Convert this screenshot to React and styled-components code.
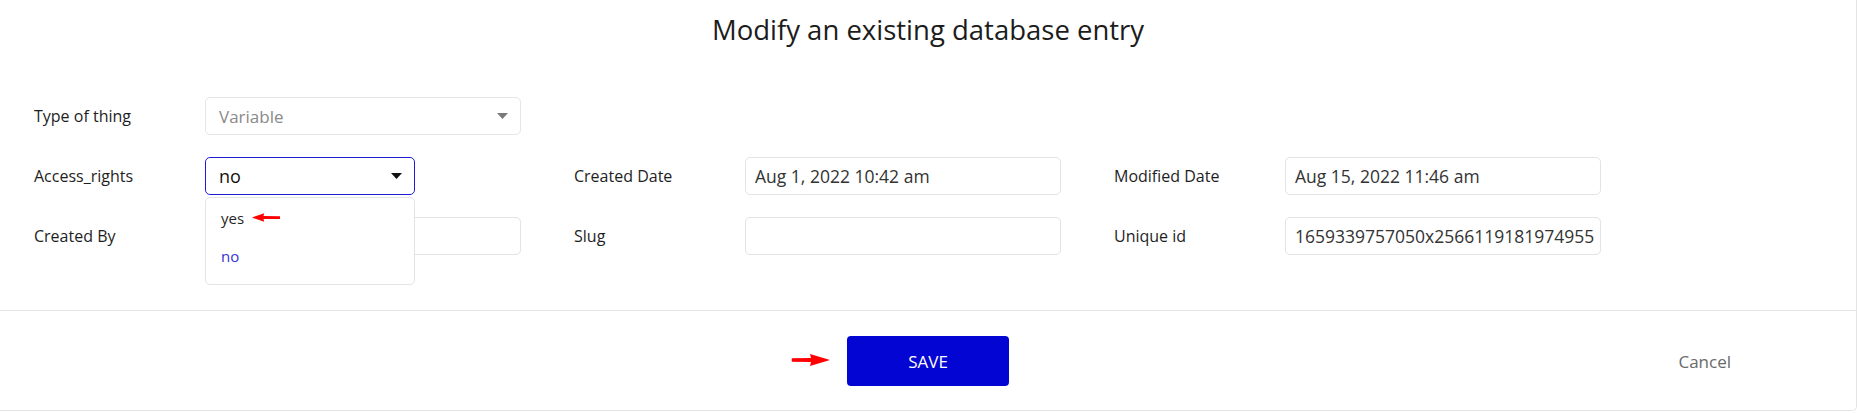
import React from "react";
import styled, { createGlobalStyle } from "styled-components";

const GlobalStyle = createGlobalStyle`
  body {
    margin: 0;
    background: #ffffff;
    font-family: "Open Sans", "Liberation Sans", sans-serif;
  }
`;

const Caret = ({ color }) => (
  <svg width="11" height="6" viewBox="0 0 11 6">
    <path d="M0 0 H11 L5.5 6 Z" fill={color} />
  </svg>
);

const RedArrow = ({ left }) => (
  <svg width="39" height="12" viewBox="0 0 39 12">
    {left ? (
      <path d="M0 6 L17 0 L16 3.8 L39 4.2 L39 8 L16 8.2 L17 12 Z" fill="#ff0000" />
    ) : (
      <path d="M39 6 L19 0 L20 4 L1 4.3 Q0 6 1 7.7 L20 8 L19 12 Z" fill="#ff0000" />
    )}
  </svg>
);

const App = () => {
  return (
    <>
      <GlobalStyle />
      <Card>
        <Title>Modify an existing database entry</Title>
        <Form>
          <Field>
            <Label>Type of thing</Label>
            <Select>
              <Placeholder>Variable</Placeholder>
              <Caret color="#7a7a7a" />
            </Select>
          </Field>
          <Empty />
          <Empty />

          <Field>
            <Label>Access_rights</Label>
            <Anchor>
              <Select $active $narrow>
                <Value>no</Value>
                <Caret color="#111111" />
              </Select>
              <Menu>
                <Option>
                  yes
                  <ArrowSlot>
                    <RedArrow left />
                  </ArrowSlot>
                </Option>
                <Option $selected>no</Option>
              </Menu>
            </Anchor>
          </Field>
          <Field>
            <Label>Created Date</Label>
            <Input>
              <InputText>Aug 1, 2022 10:42 am</InputText>
            </Input>
          </Field>
          <Field>
            <Label>Modified Date</Label>
            <Input>
              <InputText>Aug 15, 2022 11:46 am</InputText>
            </Input>
          </Field>

          <Field>
            <Label>Created By</Label>
            <Input />
          </Field>
          <Field>
            <Label>Slug</Label>
            <Input />
          </Field>
          <Field>
            <Label>Unique id</Label>
            <Input>
              <InputText>1659339757050x2566119181974955</InputText>
            </Input>
          </Field>
        </Form>
        <Footer>
          <span />
          <SaveWrap>
            <SaveArrow>
              <RedArrow />
            </SaveArrow>
            <SaveButton>SAVE</SaveButton>
          </SaveWrap>
          <Cancel>Cancel</Cancel>
        </Footer>
      </Card>
    </>
  );
};

const Card = styled.div`
  width: 1857px;
  box-sizing: border-box;
  border-right: 1px solid #e4e4e4;
  border-bottom: 1px solid #e4e4e4;
  border-bottom-right-radius: 5px;
  background: #ffffff;
`;

const Title = styled.h1`
  margin: 0;
  padding-top: 11px;
  font-size: 27.5px;
  line-height: 37px;
  font-weight: 400;
  color: #1c1c1c;
  text-align: center;
`;

const Form = styled.div`
  display: grid;
  grid-template-columns: repeat(3, 540px);
  grid-auto-rows: 38px;
  row-gap: 22px;
  padding: 49px 0 55px 34px;
  border-bottom: 1px solid #e6e6e6;
`;

const Empty = styled.div``;

const Field = styled.div`
  display: flex;
  align-items: center;
`;

const Label = styled.div`
  width: 171px;
  flex-shrink: 0;
  font-size: 16px;
  color: #1e1e1e;
`;

const Anchor = styled.div`
  position: relative;
  height: 38px;
`;

const Select = styled.div`
  box-sizing: border-box;
  width: ${(p) => (p.$narrow ? "210px" : "316px")};
  height: 38px;
  display: flex;
  align-items: center;
  justify-content: space-between;
  padding: 0 12px 0 13px;
  border: 1px solid ${(p) => (p.$active ? "#1d1dd6" : "#e6e6e6")};
  border-radius: 5px;
  background: #ffffff;
`;

const Placeholder = styled.span`
  font-size: 17px;
  color: #8a8a8a;
`;

const Value = styled.span`
  font-size: 18px;
  color: #111111;
`;

const Menu = styled.div`
  position: absolute;
  top: 40px;
  left: 0;
  width: 210px;
  box-sizing: border-box;
  padding: 1px 0 9px;
  border: 1px solid #e4e4e4;
  border-radius: 5px;
  background: #ffffff;
  z-index: 2;
`;

const Option = styled.div`
  display: flex;
  align-items: center;
  height: 38px;
  padding-left: 15px;
  font-size: 15px;
  color: ${(p) => (p.$selected ? "#3434d8" : "#262626")};
`;

const ArrowSlot = styled.span`
  display: inline-flex;
  margin-left: 8px;
  margin-top: -2px;
  svg {
    width: 28px;
    height: 11px;
  }
`;

const Input = styled.div`
  box-sizing: border-box;
  width: 316px;
  height: 38px;
  padding: 0 4px 0 9px;
  display: flex;
  align-items: center;
  border: 1px solid #e3e3e3;
  border-radius: 5px;
`;

const InputText = styled.span`
  display: block;
  overflow: hidden;
  white-space: nowrap;
  font-size: 17.5px;
  color: #333333;
`;

const Footer = styled.div`
  display: grid;
  grid-template-columns: 1fr auto 1fr;
  align-items: center;
  padding: 25px 0 24px;
`;

const SaveWrap = styled.div`
  position: relative;
`;

const SaveArrow = styled.span`
  position: absolute;
  right: calc(100% + 17px);
  top: 50%;
  margin-top: -7px;
  display: flex;
`;

const SaveButton = styled.button`
  width: 162px;
  height: 50px;
  border: none;
  border-radius: 4px;
  background: #0305d2;
  color: #ffffff;
  font-family: "Open Sans", "Liberation Sans", sans-serif;
  font-size: 17px;
  font-weight: 500;
`;

const Cancel = styled.div`
  justify-self: end;
  margin-right: 125px;
  font-size: 17px;
  color: #6a6a6a;
`;

export default App;
